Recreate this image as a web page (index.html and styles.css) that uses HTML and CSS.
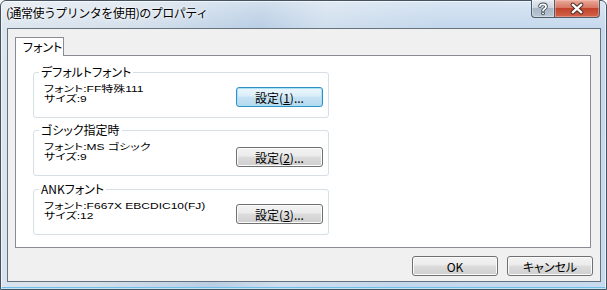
FILE: index.html
```html
<!DOCTYPE html>
<html lang="ja">
<head>
<meta charset="utf-8">
<title>(通常使うプリンタを使用)のプロパティ</title>
<link rel="stylesheet" href="styles.css">
</head>
<body>
<div class="window">
  <div class="titlebar">
    <span class="title">(通常使うプリンタを使用)のプロパティ</span>
    <div class="caption-btns">
      <div class="cbtn help">
        <svg width="23" height="17" viewBox="0 0 23 17">
          <path d="M8.3 6.2 C8.3 3.4 14.7 3.4 14.7 6.6 C14.7 8.6 11.5 8.8 11.5 10.8" fill="none" stroke="#3b4650" stroke-width="3.6" stroke-linecap="round"/>
          <circle cx="11.5" cy="13.6" r="1.9" fill="#3b4650"/>
          <path d="M8.3 6.2 C8.3 3.4 14.7 3.4 14.7 6.6 C14.7 8.6 11.5 8.8 11.5 10.8" fill="none" stroke="#fff" stroke-width="1.8" stroke-linecap="round"/>
          <circle cx="11.5" cy="13.6" r="1" fill="#fff"/>
        </svg>
      </div>
      <div class="cbtn close">
        <svg width="46" height="17" viewBox="0 0 46 17">
          <path d="M18.5 4.5 L27.5 12.5 M27.5 4.5 L18.5 12.5" stroke="#4a2a24" stroke-width="4.4" stroke-linecap="round"/>
          <path d="M18.5 4.5 L27.5 12.5 M27.5 4.5 L18.5 12.5" stroke="#fff" stroke-width="2.4" stroke-linecap="round"/>
        </svg>
      </div>
    </div>
  </div>
  <div class="client">
    <div class="tabs"><div class="tab">フォント</div></div>
    <div class="panel">
      <fieldset class="group">
        <legend>デフォルトフォント</legend>
        <div class="row">
          <div class="info"><div>フォント:FF特殊111</div><div>サイズ:9</div></div>
          <button class="btn default">設定(<u>1</u>)...</button>
        </div>
      </fieldset>
      <fieldset class="group">
        <legend>ゴシック指定時</legend>
        <div class="row">
          <div class="info"><div>フォント:MS ゴシック</div><div>サイズ:9</div></div>
          <button class="btn btn-low">設定(<u>2</u>)...</button>
        </div>
      </fieldset>
      <fieldset class="group group-last">
        <legend>ANKフォント</legend>
        <div class="row">
          <div class="info"><div>フォント:F667X EBCDIC10(FJ)</div><div>サイズ:12</div></div>
          <button class="btn">設定(<u>3</u>)...</button>
        </div>
      </fieldset>
    </div>
    <div class="footer">
      <button class="btn btn-wide">OK</button>
      <button class="btn btn-wide">キャンセル</button>
    </div>
  </div>
</div>
</body>
</html>
```
FILE: styles.css
```css
* { box-sizing: border-box; }
html, body { margin: 0; padding: 0; }
body {
  width: 607px;
  height: 290px;
  overflow: hidden;
  background: #ffffff;
  font-family: "Noto Sans CJK JP", "Noto Sans", sans-serif;
  font-size: 12px;
  color: #000;
}

.window {
  width: 607px;
  height: 290px;
  border: 1px solid #44535f;
  border-radius: 6px 6px 0 0;
  display: flex;
  flex-direction: column;
  background:
    linear-gradient(to bottom, rgba(255,255,255,0.35), rgba(255,255,255,0) 28px),
    linear-gradient(100deg, #dde6ef 0%, #d3dfeb 22%, #b9cee4 40%, #cfdeed 50%, #c3d7ec 68%, #c7daee 100%);
  box-shadow: inset 0 0 0 1px rgba(255,255,255,0.6), inset 0 -2px 0 #6fbfea;
}

.titlebar {
  height: 27px;
  display: flex;
  justify-content: space-between;
  align-items: flex-start;
  padding: 0 6px 0 5px;
}

.title {
  margin-top: 4px;
  line-height: 16px;
  font-size: 12px;
  letter-spacing: -0.5px;
  color: #000;
  text-shadow: 0 0 5px rgba(255,255,255,0.95), 0 0 2px rgba(255,255,255,0.9);
}

.caption-btns {
  display: flex;
  margin-top: -1px;
}

.cbtn {
  height: 18px;
  border: 1px solid #4f5d6b;
  border-top: 0;
  display: flex;
}
.cbtn svg { display: block; }

.help {
  width: 23px;
  border-right: 0;
  border-radius: 0 0 0 4px;
  background: linear-gradient(#e4eaf0 0%, #ccd6e0 45%, #a9b7c6 50%, #bac7d4 100%);
  box-shadow: inset 0 0 0 1px rgba(255,255,255,0.35);
}

.close {
  width: 46px;
  border-radius: 0 0 4px 0;
  background: linear-gradient(#e9ab9b 0%, #d77863 45%, #c2432b 50%, #d2644a 100%);
  box-shadow: inset 0 0 0 1px rgba(255,210,200,0.4);
}

.client {
  flex: 1;
  margin: 0 5px 7px 6px;
  border: 1px solid #66737f;
  background: #f0f0f0;
  padding: 8px 0 0 7px;
  display: flex;
  flex-direction: column;
}

.tabs {
  display: flex;
  height: 18px;
}

.tab {
  position: relative;
  z-index: 1;
  width: 49px;
  height: 19px;
  border: 1px solid #898c95;
  border-bottom: 0;
  background: #fff;
  padding-left: 7px;
  line-height: 17px;
  font-feature-settings: "palt";
}

.panel {
  width: 576px;
  height: 193px;
  border: 1px solid #898c95;
  background: #fff;
  padding: 10px 0 0 17px;
  display: flex;
  flex-direction: column;
  gap: 6px;
}

.group {
  width: 296px;
  margin: 0;
  padding: 0 5px 0 10px;
  border: 1px solid #d5dfe5;
  border-radius: 3px;
  min-width: 0;
}
.group-last { margin-top: 1px; }

.group legend {
  margin-left: -5px;
  padding: 0 2px;
  font-size: 12px;
  line-height: 12px;
  font-feature-settings: "palt";
}

.row {
  height: 39px;
  display: flex;
  justify-content: space-between;
  align-items: flex-start;
}

.info {
  margin-top: 7px;
  font-family: "Liberation Sans", "Noto Sans CJK JP", sans-serif;
  font-size: 12px;
  line-height: 13.9px;
  font-feature-settings: "palt";
  transform: scaleY(0.72);
  transform-origin: top left;
  white-space: nowrap;
}

.btn {
  width: 87px;
  height: 20px;
  margin-top: 9px;
  padding: 0;
  border: 1px solid #707070;
  border-radius: 3px;
  background: linear-gradient(#f3f3f3 0%, #ebebeb 45%, #dcdcdc 50%, #cfcfcf 100%);
  box-shadow: inset 0 0 0 1px #fbfbfb;
  font-family: "Noto Sans CJK JP", "Noto Sans", sans-serif;
  font-size: 12px;
  line-height: 17px;
  color: #000;
  font-feature-settings: "palt";
}
.btn u { text-underline-offset: 1px; }
.btn-low { margin-top: 11px; }

.btn.default {
  border-color: #2f8fc6;
  background: linear-gradient(#ecf6fc 0%, #dbeef9 45%, #c6e3f4 50%, #b6d9ee 100%);
  box-shadow: inset 0 0 0 1px #a9e1f7;
}

.footer {
  display: flex;
  justify-content: flex-end;
  gap: 9px;
  padding-right: 7px;
  margin-top: 8px;
}
.btn-wide { width: 86px; margin-top: 0; }
```
